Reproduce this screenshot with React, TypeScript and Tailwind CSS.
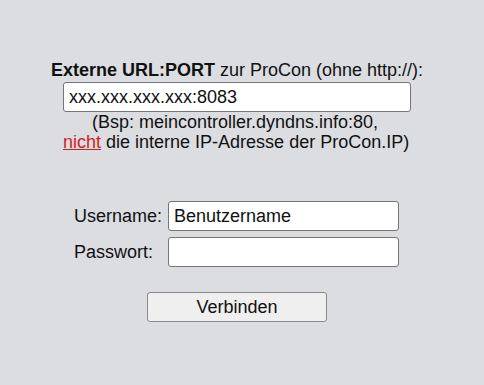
import React from "react";

export default function App() {
  return (
    <div
      className="w-[484px] h-[385px] bg-[#dcdde1] text-[#111] text-[18px]"
      style={{ fontFamily: '"Liberation Sans", Arial, sans-serif' }}
    >
      <div className="pt-[60px] ml-[63px] w-[348px]">
        <div className="-ml-[20px] w-[388px] text-center whitespace-nowrap leading-[21px] h-[21px]">
          <span className="font-bold">Externe URL:PORT</span> zur ProCon (ohne http://):
        </div>
        <div className="mt-[1px]">
          <input
            className="w-full h-[30px] bg-white border border-[#767676] rounded-[3px] px-[5px] text-[18px] text-[#111] outline-none"
            defaultValue="xxx.xxx.xxx.xxx:8083"
          />
          <div className="w-[344px] text-center whitespace-nowrap leading-[20px]">
            <div>(Bsp: meincontroller.dyndns.info:80,</div>
            <div>
              <span className="text-[#d11f1f] underline">nicht</span> die interne IP-Adresse der ProCon.IP)
            </div>
          </div>
        </div>
      </div>
      <div className="mt-[49px] ml-[74px] flex flex-col gap-[6px]">
        <div className="flex items-center">
          <span className="w-[94px] leading-[20px]">Username:</span>
          <input
            className="w-[231px] h-[30px] bg-white border border-[#767676] rounded-[3px] px-[5px] text-[18px] text-[#111] outline-none"
            defaultValue="Benutzername"
          />
        </div>
        <div className="flex items-center">
          <span className="w-[94px] leading-[20px]">Passwort:</span>
          <input
            type="password"
            className="w-[231px] h-[30px] bg-white border border-[#767676] rounded-[3px] px-[5px] text-[18px] outline-none"
          />
        </div>
      </div>
      <div className="mt-[25px] ml-[147px]">
        <button className="w-[180px] h-[30px] bg-[#efefef] border border-[#8a8a8a] rounded-[3px] text-[18px] text-[#111] leading-none">
          Verbinden
        </button>
      </div>
    </div>
  );
}
